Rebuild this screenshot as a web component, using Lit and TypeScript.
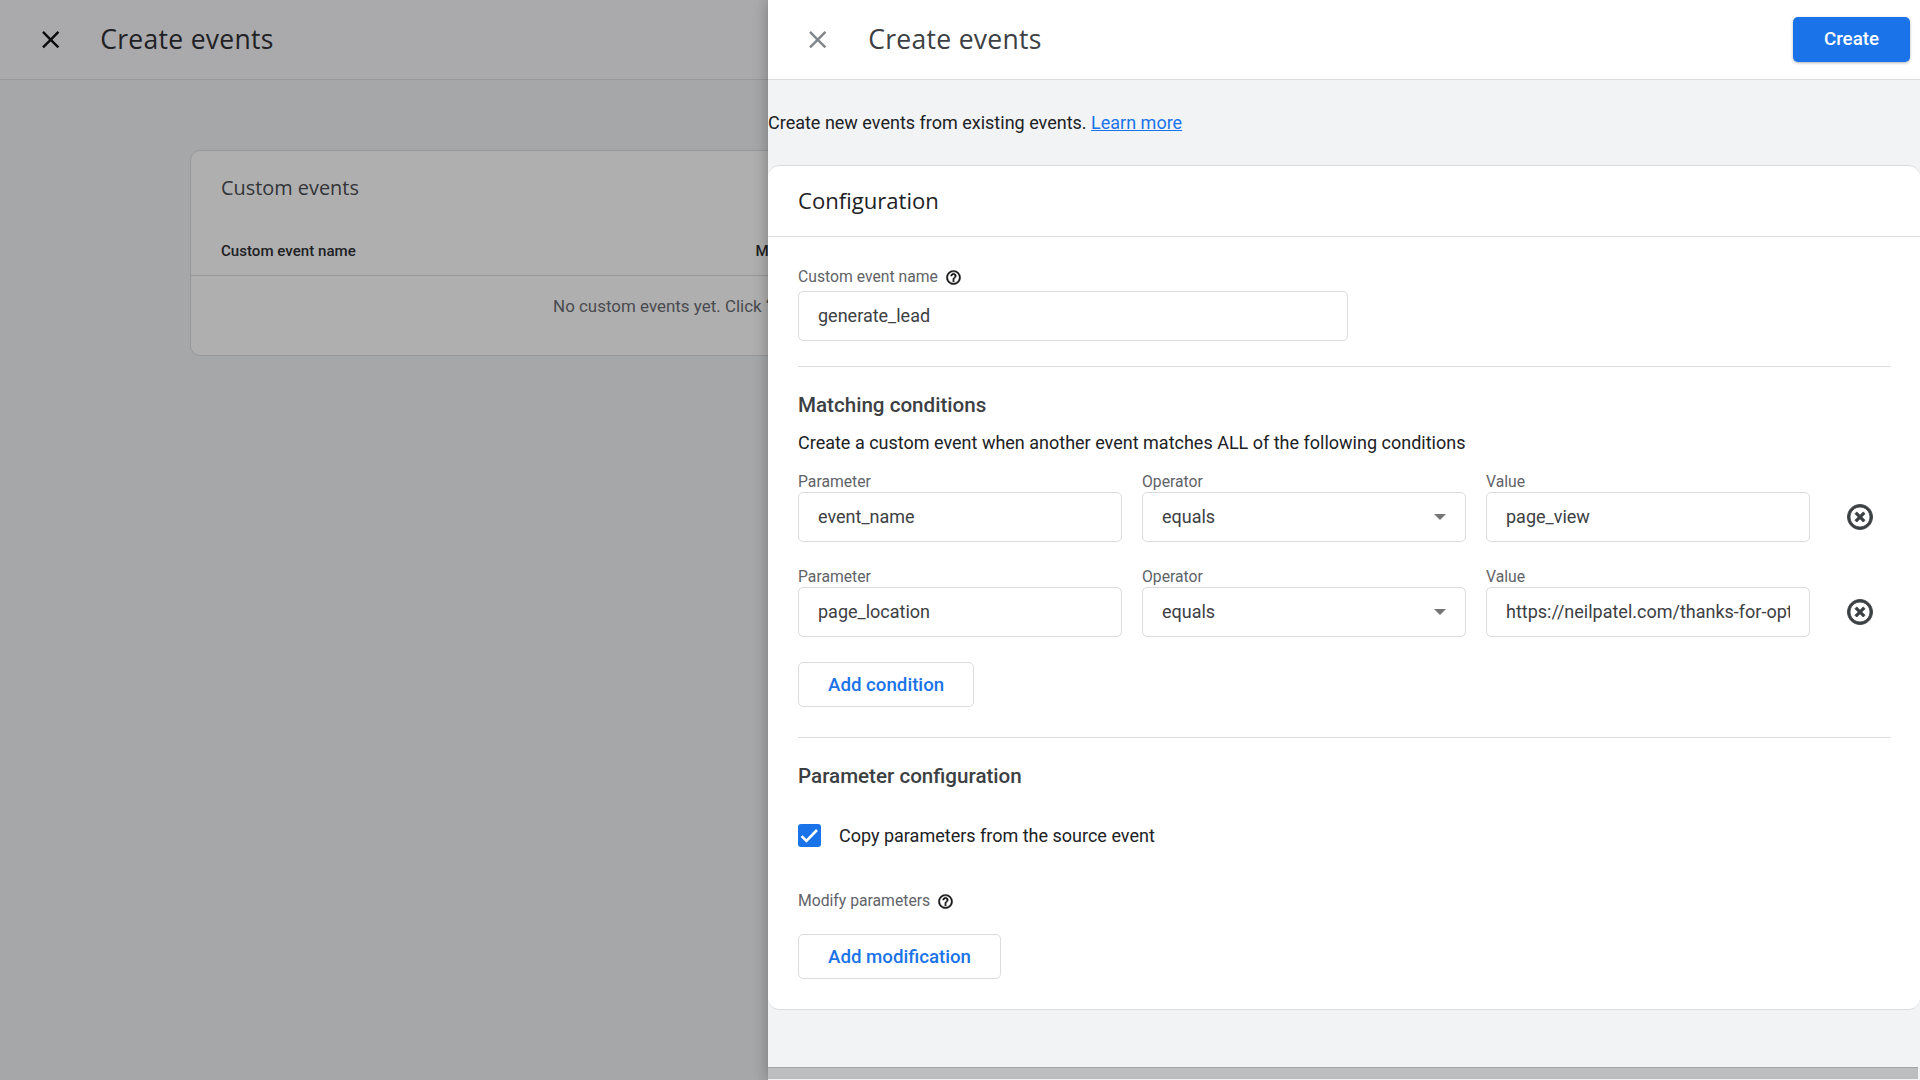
import { LitElement, html, css, svg } from "lit";
import { customElement } from "lit/decorators.js";

const CLOSE = "M19 6.41L17.59 5 12 10.59 6.41 5 5 6.41 10.59 12 5 17.59 6.41 19 12 13.41 17.59 19 19 17.59 13.41 12z";
const HELP = "M11 18h2v-2h-2v2zm1-16C6.48 2 2 6.48 2 12s4.48 10 10 10 10-4.48 10-10S17.52 2 12 2zm0 18c-4.41 0-8-3.59-8-8s3.59-8 8-8 8 3.59 8 8-3.59 8-8 8zm0-14c-2.21 0-4 1.79-4 4h2c0-1.1.9-2 2-2s2 .9 2 2c0 2-3 1.75-3 5h2c0-2.25 3-2.5 3-5 0-2.21-1.79-4-4-4z";
const REMOVE = "M14.59 8L12 10.59 9.41 8 8 9.41 10.59 12 8 14.59 9.41 16 12 13.41 14.59 16 16 14.59 13.41 12 16 9.41 14.59 8zM12 2C6.47 2 2 6.47 2 12s4.47 10 10 10 10-4.47 10-10S17.53 2 12 2zm0 18c-4.41 0-8-3.59-8-8s3.59-8 8-8 8 3.59 8 8-3.59 8-8 8z";

const icon = (d: string, cls: string) =>
  html`<svg class=${cls} viewBox="0 0 24 24" aria-hidden="true">${svg`<path d=${d}></path>`}</svg>`;

@customElement("app-root")
export class AppRoot extends LitElement {
  static styles = css`
    :host {
      display: block;
      position: relative;
      width: 1920px;
      height: 1080px;
      overflow: hidden;
      background: #f1f3f4;
      font-family: Roboto, "Liberation Sans", sans-serif;
      font-size: 18px;
      color: #202124;
    }
    * { box-sizing: border-box; }

    .bar {
      height: 80px;
      display: flex;
      align-items: center;
      background: #fff;
      border-bottom: 1px solid #dadce0;
    }
    .bar-title {
      font-family: "Open Sans", Roboto, sans-serif;
      font-size: 26.5px;
      letter-spacing: 0.3px;
      padding-bottom: 2px;
      color: #3c4043;
      white-space: nowrap;
    }
    .base .bar-title { color: #202124; }
    .icon-close { width: 29.4px; height: 29.4px; flex: none; }
    .base .bar { padding-left: 36px; gap: 34.8px; background: #f7f8f9; }
    .base .icon-close { fill: #000; }
    .drawer .bar { padding: 0 10px 0 35.3px; gap: 35.5px; }
    .drawer .icon-close { fill: #80868b; }

    .base-main { padding: 70px 0 0 190px; }
    .base-card {
      width: 1120px;
      height: 206px;
      background: #fff;
      border: 1px solid #dadce0;
      border-radius: 10px;
    }
    .base-title {
      padding: 24px 30px 0;
      height: 74px;
      line-height: 26px;
      font-family: "Open Sans", Roboto, sans-serif;
      font-size: 19.9px;
      color: #3c4043;
    }
    .base-cols {
      display: grid;
      grid-template-columns: 534.5px 1fr;
      height: 51px;
      padding: 16px 30px 0;
      border-bottom: 1px solid #dadce0;
      font-size: 15.1px;
      font-weight: 500;
      line-height: 20px;
      white-space: nowrap;
    }
    .base-empty {
      padding: 20px 10px 0 0;
      text-align: center;
      line-height: 20px;
      font-size: 16.94px;
      color: #5f6368;
    }

    .scrim {
      position: absolute;
      inset: 0;
      background: rgba(32, 33, 36, 0.36);
    }

    .drawer {
      position: absolute;
      top: 0;
      right: 0;
      bottom: 0;
      width: 1152px;
      display: flex;
      flex-direction: column;
      background: #f1f3f4;
      box-shadow: 0 0 14px rgba(0, 0, 0, 0.3);
    }
    .create {
      margin-left: auto;
      width: 117px;
      height: 45px;
      display: flex;
      align-items: center;
      justify-content: center;
      padding-bottom: 1px;
      background: #1a73e8;
      color: #fff;
      border-radius: 5px;
      font-weight: 500;
      font-size: 18.75px;
      box-shadow: 0 1px 3px rgba(60, 64, 67, 0.4);
    }
    .intro {
      height: 85px;
      display: flex;
      align-items: center;
      white-space: pre;
    }
    .intro a { color: #1a73e8; text-decoration: underline; }

    .card {
      background: #fff;
      border: 1px solid #dadce0;
      border-left: 0;
      border-right: 0;
      border-radius: 12px;
      height: 845px;
    }
    .card-head {
      height: 71px;
      display: flex;
      align-items: center;
      padding: 0 30px 2px;
      border-bottom: 1px solid #dadce0;
      font-family: "Open Sans", Roboto, sans-serif;
      font-size: 22.1px;
      color: #202124;
    }
    .card-body { padding: 31px 29px 0 30px; }

    .label {
      display: flex;
      align-items: center;
      height: 18px;
      font-size: 15.72px;
      line-height: 18px;
      color: #5f6368;
      white-space: nowrap;
    }
    .icon-help { width: 17px; height: 17px; fill: #111; stroke: #111; stroke-width: 0.6; margin-left: 7px; flex: none; }
    .label-gap { margin-bottom: 5px; }

    .input {
      height: 50px;
      display: flex;
      align-items: center;
      padding: 0 19px 2px;
      background: #fff;
      border: 1px solid #dadce0;
      border-radius: 5px;
      color: #3c4043;
    }
    .input-text { flex: 1; min-width: 0; overflow: hidden; white-space: nowrap; }
    .name-input { width: 550px; }
    .arrow {
      width: 0;
      height: 0;
      border-left: 6.5px solid transparent;
      border-right: 6.5px solid transparent;
      border-top: 6.5px solid #757575;
      margin: 2px 0 0;
      flex: none;
    }

    .rule { height: 1px; background: #dadce0; }
    .rule-a { margin-top: 25px; }
    .rule-b { margin-top: 30px; }

    .section-title {
      height: 24px;
      line-height: 24px;
      font-size: 20.6px;
      font-weight: 500;
      color: #3c4043;
    }
    .rule + .section-title { margin-top: 26px; }
    .section-text {
      height: 24px;
      line-height: 24px;
      margin-top: 14px;
      color: #202124;
    }

    .rows { display: flex; flex-direction: column; gap: 26px; margin-top: 18px; }
    .row {
      display: grid;
      grid-template-columns: 324px 324px 324px 1fr;
      column-gap: 20px;
      align-items: end;
    }
    .field .label { margin-bottom: 1px; }
    .remove { height: 50px; display: flex; align-items: center; padding-left: 15px; }
    .icon-remove { width: 30px; height: 30px; fill: #3c4043; stroke: #3c4043; stroke-width: 0.7; }

    .btn {
      display: flex;
      align-items: center;
      height: 45px;
      padding: 0 0 0 29px;
      background: #fff;
      border: 1px solid #dadce0;
      border-radius: 5px;
      color: #1a73e8;
      font-weight: 500;
      font-size: 18.7px;
      white-space: nowrap;
    }
    .btn-cond { margin-top: 25px; width: 176px; }
    .btn-mod { margin-top: 24px; width: 203px; }

    .check-row {
      display: flex;
      align-items: center;
      gap: 18px;
      height: 23px;
      margin-top: 36px;
    }
    .check {
      width: 23px;
      height: 23px;
      background: #1a73e8;
      border-radius: 3px;
      display: block;
      flex: none;
    }
    .modify { margin-top: 45px; }

    .track {
      margin-top: auto;
      margin-bottom: 1px;
      margin-right: 2px;
      height: 12px;
      background: #bdbec0;
      border-top: 1px solid #a3a4a6;
    }
  `;

  private field(label: string, value: string, select = false) {
    return html`<div class="field">
      <div class="label">${label}</div>
      <div class="input">
        <div class="input-text">${value}</div>
        ${select ? html`<span class="arrow"></span>` : ""}
      </div>
    </div>`;
  }

  private row(param: string, value: string) {
    return html`<div class="row">
      ${this.field("Parameter", param)}
      ${this.field("Operator", "equals", true)}
      ${this.field("Value", value)}
      <div class="remove">${icon(REMOVE, "icon-remove")}</div>
    </div>`;
  }

  render() {
    return html`
      <div class="base">
        <div class="bar">
          ${icon(CLOSE, "icon-close")}
          <div class="bar-title">Create events</div>
        </div>
        <div class="base-main">
          <div class="base-card">
            <div class="base-title">Custom events</div>
            <div class="base-cols"><span>Custom event name</span><span>Matching conditions</span></div>
            <div class="base-empty">No custom events yet. Click “Create” to get started.</div>
          </div>
        </div>
      </div>
      <div class="scrim"></div>
      <div class="drawer">
        <div class="bar">
          ${icon(CLOSE, "icon-close")}
          <div class="bar-title">Create events</div>
          <div class="create">Create</div>
        </div>
        <div class="intro">Create new events from existing events. <a>Learn more</a></div>
        <div class="card">
          <div class="card-head">Configuration</div>
          <div class="card-body">
            <div class="label label-gap">Custom event name${icon(HELP, "icon-help")}</div>
            <div class="input name-input"><div class="input-text">generate_lead</div></div>
            <div class="rule rule-a"></div>
            <div class="section-title">Matching conditions</div>
            <div class="section-text">Create a custom event when another event matches ALL of the following conditions</div>
            <div class="rows">
              ${this.row("event_name", "page_view")}
              ${this.row("page_location", "https://neilpatel.com/thanks-for-optin")}
            </div>
            <div class="btn btn-cond">Add condition</div>
            <div class="rule rule-b"></div>
            <div class="section-title">Parameter configuration</div>
            <div class="check-row">
              <svg class="check" viewBox="0 0 23 23" aria-hidden="true">
                <path d="M3.6 12.2l4.8 4.8 10.6-11" fill="none" stroke="#fff" stroke-width="2.6"></path>
              </svg>
              <span>Copy parameters from the source event</span>
            </div>
            <div class="label modify">Modify parameters${icon(HELP, "icon-help")}</div>
            <div class="btn btn-mod">Add modification</div>
          </div>
        </div>
        <div class="track"></div>
      </div>
    `;
  }
}
